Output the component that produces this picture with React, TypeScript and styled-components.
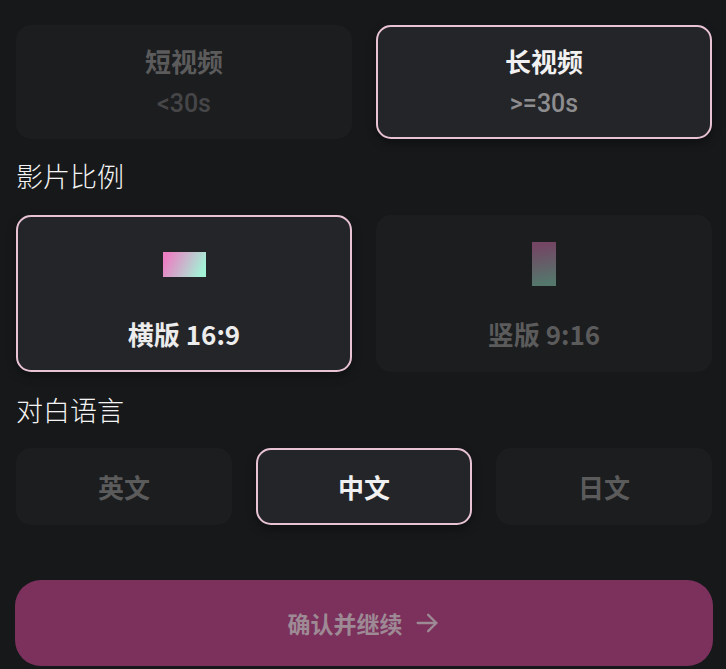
import React, { useState } from "react";
import styled, { createGlobalStyle } from "styled-components";

const Global = createGlobalStyle`
  html, body { margin: 0; padding: 0; background: #17181a; }
  body { font-family: "Noto Sans CJK SC", "Noto Sans", sans-serif; }
  * { box-sizing: border-box; }
`;

const Page = styled.div`
  width: 726px;
  min-height: 669px;
  background: #17181a;
  padding: 25px 14px 0 16px;
  display: flex;
  flex-direction: column;
`;

const Grid = styled.div<{ $cols: number; $h: number }>`
  display: grid;
  grid-template-columns: repeat(${(p) => p.$cols}, 1fr);
  column-gap: 24px;
  height: ${(p) => p.$h}px;
`;

const Card = styled.button<{ $active: boolean }>`
  all: unset;
  cursor: pointer;
  display: flex;
  flex-direction: column;
  align-items: center;
  justify-content: center;
  border-radius: 15px;
  background: ${(p) => (p.$active ? "#242528" : "#1c1d1f")};
  border: 2px solid ${(p) => (p.$active ? "#e8c3d4" : "transparent")};
  box-shadow: ${(p) => (p.$active ? "0 4px 10px rgba(0,0,0,0.35)" : "none")};
  font-family: "Noto Sans CJK SC", "Noto Sans", sans-serif;
`;

const Title = styled.div<{ $active: boolean }>`
  font-size: 26px;
  line-height: 30px;
  font-weight: 700;
  color: ${(p) => (p.$active ? "#f1f1f1" : "#5b5b5c")};
`;

const Sub = styled.div<{ $active: boolean }>`
  font-family: Roboto, "Noto Sans", sans-serif;
  font-size: 25px;
  line-height: 30px;
  font-weight: 500;
  margin-top: 13px;
  color: ${(p) => (p.$active ? "#8d8d8f" : "#464648")};
`;

const Label = styled.div<{ $top: number; $bottom: number }>`
  font-family: "Noto Sans CJK SC", sans-serif;
  font-weight: 300;
  font-size: 27px;
  line-height: 32px;
  color: #f4f4f4;
  margin: ${(p) => p.$top}px 0 ${(p) => p.$bottom}px 0;
`;

const RatioCard = styled(Card)`
  justify-content: flex-start;
  padding-top: 25px;
`;

const IconBox = styled.div`
  height: 44px;
  display: flex;
  align-items: center;
  justify-content: center;
`;

const Swatch = styled.div<{ $w: number; $h: number; $dim: boolean }>`
  width: ${(p) => p.$w}px;
  height: ${(p) => p.$h}px;
  background: linear-gradient(
    ${(p) => (p.$dim ? "170deg" : "115deg")},
    #ec7fc3 10%,
    #a2f3d6 90%
  );
  opacity: ${(p) => (p.$dim ? 0.42 : 1)};
`;

const RatioText = styled(Title)`
  margin-top: 32px;
  line-height: 32px;
  color: ${(p) => (p.$active ? "#ececec" : "#5b5b5c")};
`;

const Confirm = styled.button`
  all: unset;
  cursor: pointer;
  margin: 55px -1px 0 -1px;
  height: 86px;
  border-radius: 26px;
  background: #7b315c;
  display: flex;
  align-items: center;
  justify-content: center;
  gap: 10px;
  color: #9e8a95;
  font-family: "Noto Sans CJK SC", sans-serif;
  font-size: 23px;
  font-weight: 700;
`;

const Arrow = () => (
  <svg width="28" height="28" viewBox="0 0 24 24" fill="none" stroke="currentColor" strokeWidth="2" strokeLinecap="round" strokeLinejoin="round">
    <path d="M4 12h16" />
    <path d="M13 5l7 7-7 7" />
  </svg>
);

export default function App() {
  const [len, setLen] = useState(1);
  const [ratio, setRatio] = useState(0);
  const [lang, setLang] = useState(1);

  const lengths = [
    { t: "短视频", s: "<30s" },
    { t: "长视频", s: ">=30s" },
  ];
  const ratios = [
    { t: "横版 16:9", w: 43, h: 25 },
    { t: "竖版 9:16", w: 24, h: 44 },
  ];
  const langs = ["英文", "中文", "日文"];

  return (
    <Page>
      <Global />
      <Grid $cols={2} $h={114}>
        {lengths.map((l, i) => (
          <Card key={l.t} $active={len === i} onClick={() => setLen(i)}>
            <Title $active={len === i}>{l.t}</Title>
            <Sub $active={len === i}>{l.s}</Sub>
          </Card>
        ))}
      </Grid>
      <Label $top={21} $bottom={23}>影片比例</Label>
      <Grid $cols={2} $h={157}>
        {ratios.map((r, i) => (
          <RatioCard key={r.t} $active={ratio === i} onClick={() => setRatio(i)}>
            <IconBox>
              <Swatch $w={r.w} $h={r.h} $dim={ratio !== i} />
            </IconBox>
            <RatioText $active={ratio === i}>{r.t}</RatioText>
          </RatioCard>
        ))}
      </Grid>
      <Label $top={22} $bottom={22}>对白语言</Label>
      <Grid $cols={3} $h={77}>
        {langs.map((l, i) => (
          <Card key={l} $active={lang === i} onClick={() => setLang(i)}>
            <Title $active={lang === i}>{l}</Title>
          </Card>
        ))}
      </Grid>
      <Confirm>
        确认并继续
        <Arrow />
      </Confirm>
    </Page>
  );
}
